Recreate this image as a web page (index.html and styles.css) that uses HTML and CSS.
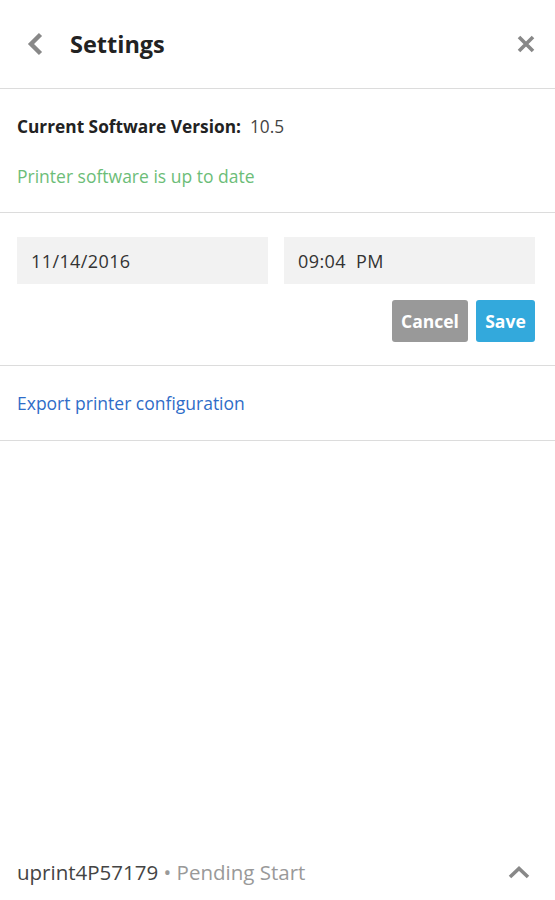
FILE: index.html
```html
<!DOCTYPE html>
<html>
<head>
<meta charset="utf-8">
<link rel="stylesheet" href="styles.css">
</head>
<body>
<div class="app">
  <header class="header">
    <span class="back">
      <svg width="18" height="24" viewBox="0 0 18 24"><path d="M14.5 2.5 L5 12 L14.5 21.5" fill="none" stroke="#888" stroke-width="4.4"/></svg>
    </span>
    <h1 class="title">Settings</h1>
    <span class="close">
      <svg width="18" height="18" viewBox="0 0 18 18"><path d="M2 2 L16 16 M16 2 L2 16" fill="none" stroke="#888" stroke-width="3.6"/></svg>
    </span>
  </header>
  <section class="section version">
    <div class="row"><span class="label">Current Software Version:</span><span class="value">10.5</span></div>
    <div class="status">Printer software is up to date</div>
  </section>
  <section class="section datetime">
    <div class="inputs">
      <div class="field">11/14/2016</div>
      <div class="field">09:04&nbsp; PM</div>
    </div>
    <div class="actions">
      <button class="btn cancel">Cancel</button>
      <button class="btn save">Save</button>
    </div>
  </section>
  <section class="section export">
    <a class="link">Export printer configuration</a>
  </section>
  <footer class="footer">
    <div class="printer"><span class="name">uprint4P57179</span><span class="state"> • Pending Start</span></div>
    <span class="up">
      <svg width="22" height="14" viewBox="0 0 22 14"><path d="M2 12 L11 3.5 L20 12" fill="none" stroke="#888" stroke-width="3.6"/></svg>
    </span>
  </footer>
</div>
</body>
</html>
```
FILE: styles.css
```css
* { box-sizing: border-box; }
html, body { margin: 0; padding: 0; }
body {
  font-family: "Open Sans", "Noto Sans", sans-serif;
  color: #333;
  background: #fff;
}
.app {
  display: flex;
  flex-direction: column;
  min-height: 100vh;
}
.header {
  height: 89px;
  display: flex;
  align-items: center;
  padding: 0 20px 0 26px;
  border-bottom: 1px solid #dcdcdc;
}
.back { display: flex; width: 44px; }
.title {
  margin: 0;
  font-size: 23.5px;
  font-weight: 700;
  color: #222;
  flex: 1;
}
.close { display: flex; }
.section {
  border-bottom: 1px solid #dcdcdc;
  padding: 0 20px 0 17px;
}
.version { padding-top: 26px; padding-bottom: 24px; }
.row { display: flex; align-items: baseline; font-size: 17.3px; line-height: 24px; }
.label { font-weight: 700; color: #222; margin-right: 9px; }
.value { color: #444; }
.status { margin-top: 25px; font-size: 17.5px; line-height: 24px; color: #6cbd78; }
.datetime { padding-top: 24px; padding-bottom: 23px; }
.inputs { display: grid; grid-template-columns: 1fr 1fr; gap: 16px; }
.field {
  height: 47px;
  background: #f2f2f2;
  display: flex;
  align-items: center;
  padding: 0 14px;
  font-size: 18px;
  letter-spacing: 0.4px;
  color: #333;
}
.actions { display: flex; justify-content: flex-end; gap: 8px; margin-top: 16px; }
.btn {
  height: 42px;
  border: none;
  border-radius: 3px;
  color: #fff;
  font-family: inherit;
  font-weight: 700;
  font-size: 17.5px;
  padding: 0;
}
.cancel { background: #999; width: 76px; }
.save { background: #33a9dc; width: 59px; }
.export { height: 75px; display: flex; align-items: center; }
.link { color: #2f6dc8; font-size: 17.5px; }
.footer {
  margin-top: auto;
  height: 56px;
  padding: 0 25px 0 17px;
  display: flex;
  align-items: center;
  justify-content: space-between;
  font-size: 20.5px;
}
.name { color: #444; }
.state { color: #999; }
.up { display: flex; }
```
